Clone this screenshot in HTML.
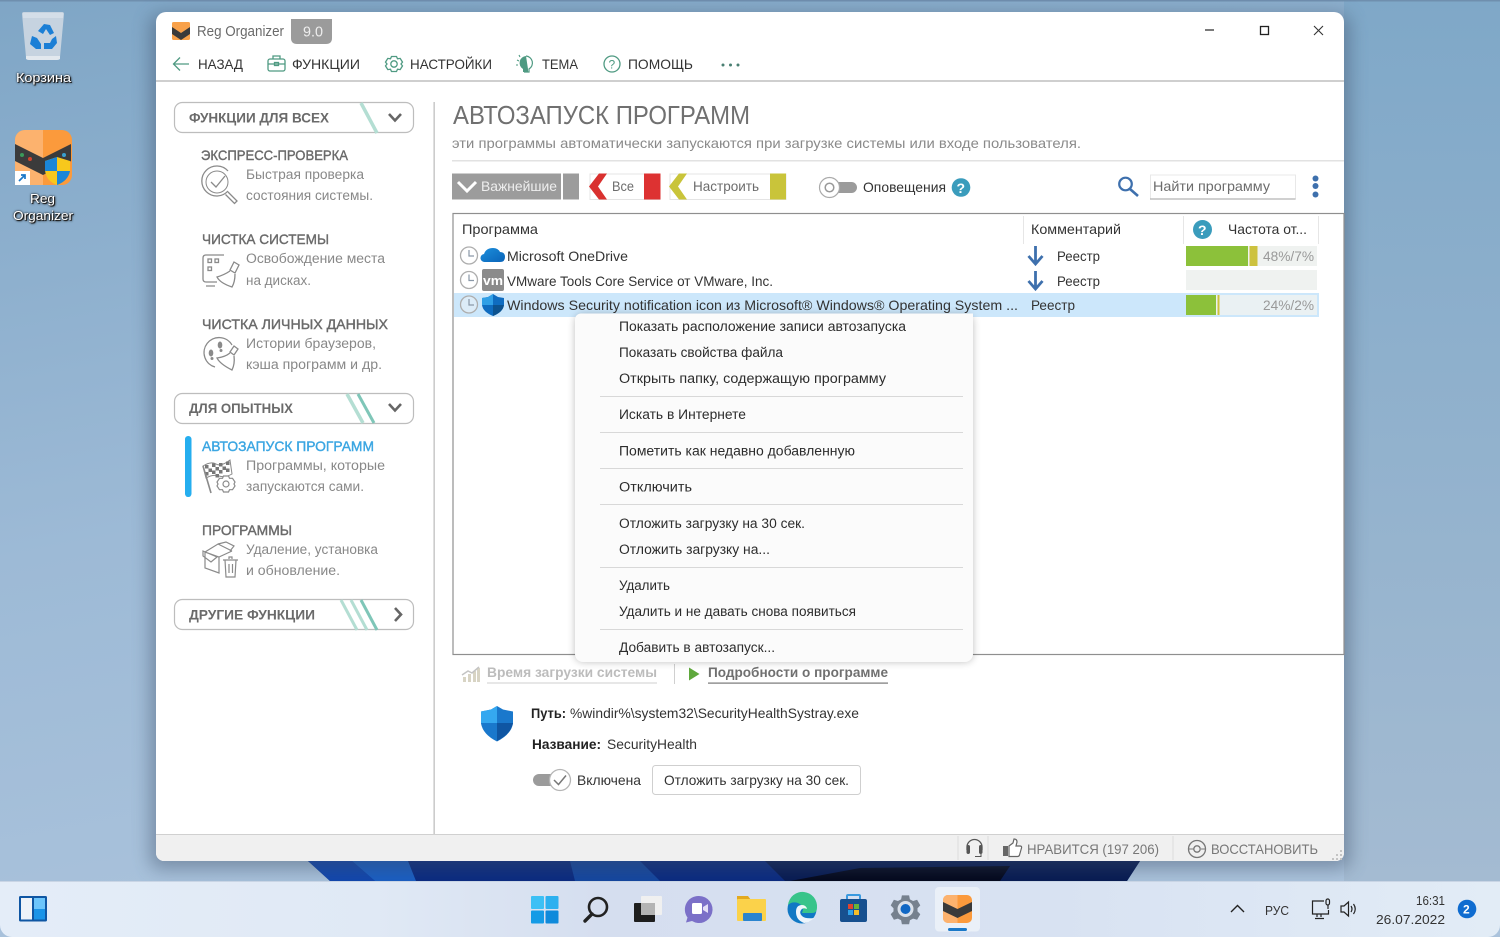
<!DOCTYPE html>
<html lang="ru"><head><meta charset="utf-8"><title>Reg Organizer</title>
<style>
html,body{margin:0;padding:0;width:1500px;height:937px;overflow:hidden;background:#9db9d2}
svg{display:block}
text{font-family:"Liberation Sans","DejaVu Sans",sans-serif;font-size:14px;fill:#333}
.g{fill:#888;font-size:13.5px}
.h{fill:#6a6a6a;font-size:14px;font-weight:bold}
.s{fill:#6c6c6c;font-size:14px}
.t{fill:#333;font-size:14px}
.m{fill:#2c2c2c;font-size:13.5px}
.d{fill:#fff;font-size:13px;filter:drop-shadow(1px 1px 0 #222) drop-shadow(0 0 1px #111)}
.k{fill:#222;font-size:13.5px;font-weight:bold}
</style></head><body>
<svg width="1500" height="937" viewBox="0 0 1500 937" xmlns="http://www.w3.org/2000/svg">
<defs>
<linearGradient id="wp" x1="0" y1="0" x2="0.3" y2="1"><stop offset="0" stop-color="#7fa6c6"/><stop offset=".55" stop-color="#9dbad6"/><stop offset="1" stop-color="#abc3dc"/></linearGradient>
<linearGradient id="wp2" x1="0" y1="0" x2="0" y2="1"><stop offset="0" stop-color="#7fa8c8"/><stop offset="1" stop-color="#a4bbd2"/></linearGradient>
<linearGradient id="tb" x1="0" y1="0" x2="1" y2="0"><stop offset="0" stop-color="#e4edf8"/><stop offset=".25" stop-color="#e0e9f5"/><stop offset=".4" stop-color="#d5deef"/><stop offset=".7" stop-color="#d8e2f2"/><stop offset="1" stop-color="#e2ecf6"/></linearGradient>
<linearGradient id="od" x1="0" y1="0" x2="1" y2="1"><stop offset="0" stop-color="#1c8fdc"/><stop offset="1" stop-color="#0a63b8"/></linearGradient>
<filter id="ws" x="-5%" y="-5%" width="110%" height="110%"><feGaussianBlur stdDeviation="9"/></filter>
<filter id="ms" x="-10%" y="-10%" width="120%" height="120%"><feGaussianBlur stdDeviation="4"/></filter>
</defs>

<!-- wallpaper -->
<rect width="1500" height="937" fill="url(#wp)"/>
<rect x="1344" width="156" height="881" fill="url(#wp2)"/>
<rect width="1500" height="1.5" fill="#6f8fae"/>
<polygon points="308,861 330,881 1127,881 1140,861" fill="#0a2a80"/>
<polygon points="308,861 330,881 375,881 352,861" fill="#1146ad"/>
<polygon points="352,861 375,881 416,881 408,861" fill="#1a5ec2"/>
<polygon points="570,861 575,881 660,881 640,861" fill="#14469f"/>
<polygon points="765,861 785,881 1127,881 1140,861" fill="#071a52"/>
<polygon points="790,881 860,868 1010,866 1000,881" fill="#03071c"/>
<rect x="150" y="14" width="1200" height="855" rx="10" fill="#3c5068" opacity=".45" filter="url(#ws)"/>

<!-- desktop icons -->
<path d="M22 14q0-2 2-2h38q2 0 2 2l-4 43q-1 3-4 3H30q-3 0-4-3z" fill="#c6d3e0"/>
<path d="M23 13h40v5H23z" fill="#d4dee8"/>
<path d="M26 56h34v3q-1 1-3 1H29q-2 0-3-1z" fill="#e2e8ee"/>
<path d="M44 24l6 1 4 8-4 2-4-6-3 5-5-3zM32 36l5 2 4 6 0 5h-5l-6-5zM56 36l1 7-5 6h-8v-6h6l2-4z" fill="#1b7fd6"/>
<text class="d" x="16" y="82" textLength="55" lengthAdjust="spacingAndGlyphs">Корзина</text>
<rect x="15" y="130" width="57" height="55" rx="10" fill="#fb9a3c"/>
<path d="M43 130H25a10 10 0 0 0-10 10v35a10 10 0 0 0 10 10h18z" fill="#fcb26e"/>
<path d="M15 144l28 14 28-14v17l-28 14-28-14z" fill="#3b3b3b"/>
<circle cx="22" cy="155" r="2" fill="#3a9a5a"/><circle cx="30" cy="159" r="2" fill="#d0432c"/><circle cx="64" cy="155" r="2" fill="#38a0d0"/>
<path d="M45 161l12-4 13 4v9q-2 11-13 15-11-4-12-15z" fill="#f7c81c"/>
<path d="M45 161l12-4v14H45zM57 171h13q-2 10-13 14z" fill="#1a86d8"/>
<rect x="15" y="171" width="15" height="14" fill="#fff"/>
<path d="M19 181l6-6m-4 0h4v4" stroke="#1a78c8" stroke-width="1.7" fill="none"/>
<text class="d" x="30" y="203" textLength="25" lengthAdjust="spacingAndGlyphs">Reg</text>
<text class="d" x="13" y="220" textLength="60" lengthAdjust="spacingAndGlyphs">Organizer</text>

<!-- window -->
<path d="M166 12H1334a10 10 0 0 1 10 10V853a8 8 0 0 1-8 8H164a8 8 0 0 1-8-8V22a10 10 0 0 1 10-10z" fill="#fff"/>
<rect x="172" y="22" width="18" height="18" rx="1.500" fill="#f8a14a"/>
<path d="M172 27l9 6 9-6v7l-9 6-9-6z" fill="#3a3a3a"/>
<text x="197" y="36" textLength="87" lengthAdjust="spacingAndGlyphs" style="fill:#6a6a6a;font-size:14.500px">Reg Organizer</text>
<path d="M291 19h41v19q0 6-6 6h-29q-6 0-6-6z" fill="#9b9b9b"/>
<text x="303" y="36.500" textLength="20" lengthAdjust="spacingAndGlyphs" style="fill:#eee;font-size:14.500px">9.0</text>
<path d="M1205 30h9" stroke="#333" stroke-width="1.300"/>
<rect x="1260.500" y="26.500" width="8" height="8" fill="none" stroke="#222" stroke-width="1.300"/>
<path d="M1314 26l9 9m0-9l-9 9" stroke="#333" stroke-width="1.100"/>

<!-- nav -->
<path d="M189 64h-15m6-6.500l-6.500 6.500 6.500 6.500" fill="none" stroke="#4f9a82" stroke-width="1.300"/>
<text class="t" x="198" y="69" textLength="45" lengthAdjust="spacingAndGlyphs">НАЗАД</text>
<g fill="none" stroke="#4f9a82" stroke-width="1.300"><rect x="268" y="59" width="17" height="12" rx="2"/><path d="M268 64h17M273 59v-3h7v3"/><rect x="274.500" y="62.500" width="4" height="3"/></g>
<text class="t" x="292" y="69" textLength="68" lengthAdjust="spacingAndGlyphs">ФУНКЦИИ</text>
<g fill="none" stroke="#4f9a82" stroke-width="1.300"><circle cx="394" cy="64" r="3.200"/><path d="M391.500 56.500h5l1 2.300 2.700-.4 2.300 3.700-1.500 1.900 1.500 1.900-2.300 3.700-2.700-.4-1 2.300h-5l-1-2.300-2.700.4-2.300-3.700 1.500-1.900-1.500-1.900 2.300-3.700 2.700.4z"/></g>
<text class="t" x="410" y="69" textLength="82" lengthAdjust="spacingAndGlyphs">НАСТРОЙКИ</text>
<path d="M526 56a7 7 0 0 0-3 13v3h5v-3" fill="#4f9a82"/><path d="M526 56a7 7 0 0 1 3 13v3h-5" fill="none" stroke="#4f9a82" stroke-width="1.200"/><path d="M517 60l2 1M516 65h2M519 55l1 2" stroke="#4f9a82" stroke-width="1.100"/>
<text class="t" x="542" y="69" textLength="36" lengthAdjust="spacingAndGlyphs">ТЕМА</text>
<circle cx="612" cy="64" r="8" fill="none" stroke="#4f9a82" stroke-width="1.300"/>
<text x="608.500" y="68.500" style="fill:#4f9a82;font-size:12px">?</text>
<text class="t" x="628" y="69" textLength="65" lengthAdjust="spacingAndGlyphs">ПОМОЩЬ</text>
<g fill="#4a7f72"><circle cx="723" cy="65" r="1.500"/><circle cx="730.500" cy="65" r="1.500"/><circle cx="738" cy="65" r="1.500"/></g>
<rect x="156" y="80" width="1188" height="2" fill="#cfcfcf"/>

<!-- sidebar -->
<rect x="174.500" y="102.500" width="239" height="30" rx="8" fill="#fff" stroke="#bdbdbd" stroke-width="1.200"/>
<path d="M361 103l16 30" stroke="#b4ded3" stroke-width="3.500"/>
<path d="M389 114l6 6.500 6-6.500" fill="none" stroke="#666" stroke-width="2.600"/>
<text class="h" x="189" y="122.500" textLength="140" lengthAdjust="spacingAndGlyphs">ФУНКЦИИ ДЛЯ ВСЕХ</text>

<text class="h" x="201" y="160" textLength="147" lengthAdjust="spacingAndGlyphs" style="font-weight:normal;stroke:#6a6a6a;stroke-width:.4">ЭКСПРЕСС-ПРОВЕРКА</text>
<g fill="none" stroke="#8a8a8a" stroke-width="1.300"><path d="M228 171a15 15 0 1 0 0 20"/><circle cx="217" cy="182" r="11" stroke-width="1"/><path d="M228 192l9 9-2.500 2.500-9-9M211 182l5 5 9-11" /></g>
<text class="g" x="246" y="179" textLength="118" lengthAdjust="spacingAndGlyphs">Быстрая проверка</text>
<text class="g" x="246" y="200" textLength="127" lengthAdjust="spacingAndGlyphs">состояния системы.</text>

<text class="h" x="202" y="244" textLength="127" lengthAdjust="spacingAndGlyphs" style="font-weight:normal;stroke:#6a6a6a;stroke-width:.4">ЧИСТКА СИСТЕМЫ</text>
<g fill="none" stroke="#8a8a8a" stroke-width="1.300"><path d="M224 255h-18q-3 0-3 3v21q0 3 3 3h11M206 286h9"/><rect x="208" y="259" width="3.500" height="3.500"/><rect x="215" y="259" width="3.500" height="3.500"/><rect x="208" y="267" width="3.500" height="3.500"/><path d="M234 262l5 3-4 8-5-3zM230 271q-6 4-13 6 3 6 15 10 3-5 3-13"/></g>
<text class="g" x="246" y="263" textLength="139" lengthAdjust="spacingAndGlyphs">Освобождение места</text>
<text class="g" x="246" y="285" textLength="65" lengthAdjust="spacingAndGlyphs">на дисках.</text>

<text class="h" x="202" y="329" textLength="186" lengthAdjust="spacingAndGlyphs" style="font-weight:normal;stroke:#6a6a6a;stroke-width:.4">ЧИСТКА ЛИЧНЫХ ДАННЫХ</text>
<g fill="none" stroke="#8a8a8a" stroke-width="1.300"><path d="M232 345a15 15 0 1 0-17 22"/><path d="M234 346l4 3-4 6-4-3zM230 353q-5 4-13 5 3 6 15 12 3-6 2-14"/></g>
<g fill="#8a8a8a"><ellipse cx="211" cy="353" rx="2.300" ry="3.500"/><ellipse cx="220" cy="345" rx="2.300" ry="3.500"/><circle cx="212" cy="358.500" r="1.500"/><circle cx="221" cy="350.500" r="1.500"/></g>
<text class="g" x="246" y="348" textLength="130" lengthAdjust="spacingAndGlyphs">Истории браузеров,</text>
<text class="g" x="246" y="369" textLength="136" lengthAdjust="spacingAndGlyphs">кэша программ и др.</text>

<rect x="174.500" y="393.500" width="239" height="30" rx="8" fill="#fff" stroke="#bdbdbd" stroke-width="1.200"/>
<path d="M347 394l16 29" stroke="#b4ded3" stroke-width="3.500"/><path d="M358 394l16 29" stroke="#7fc6b8" stroke-width="3"/>
<path d="M389 404l6 6.500 6-6.500" fill="none" stroke="#666" stroke-width="2.600"/>
<text class="h" x="189" y="413" textLength="104" lengthAdjust="spacingAndGlyphs">ДЛЯ ОПЫТНЫХ</text>

<rect x="185" y="436" width="6.500" height="61" rx="3.200" fill="#25aeef"/>
<text class="h" x="202" y="451" textLength="172" lengthAdjust="spacingAndGlyphs" style="font-weight:normal;fill:#3ba6e2;stroke:#3ba6e2;stroke-width:.4">АВТОЗАПУСК ПРОГРАММ</text>
<path d="M203 466q8-5 13-2t14-4l2 14q-7 4-13 2t-13 2z" fill="#fff" stroke="#8a8a8a" stroke-width="1"/>
<g fill="#777"><rect x="205" y="465" width="3.500" height="3.500"/><rect x="212" y="463.500" width="3.500" height="3.500"/><rect x="219" y="463" width="3.500" height="3.500"/><rect x="226" y="461.500" width="3.500" height="3.500"/><rect x="208.500" y="468.500" width="3.500" height="3.500"/><rect x="215.500" y="467" width="3.500" height="3.500"/><rect x="222.500" y="466.500" width="3.500" height="3.500"/><rect x="205" y="472" width="3.500" height="3.500"/><rect x="212" y="470.500" width="3.500" height="3.500"/><rect x="219" y="470" width="3.500" height="3.500"/><rect x="226" y="468.500" width="3.500" height="3.500"/><rect x="215.500" y="474" width="3.500" height="3.500"/></g>
<path d="M203 466l8 27" stroke="#8a8a8a" stroke-width="1.600"/>
<g fill="none" stroke="#8a8a8a" stroke-width="1.200"><path d="M223.500 476h5l1 2.300 3 0 2.500 3.700-1 2 1 2-2.500 3.700-3 0-1 2.300h-5l-1-2.300-3 0-2.500-3.700 1-2-1-2 2.500-3.700 3 0z" fill="#fff"/><circle cx="226" cy="484" r="3"/></g>
<text class="g" x="246" y="470" textLength="139" lengthAdjust="spacingAndGlyphs">Программы, которые</text>
<text class="g" x="246" y="491" textLength="118" lengthAdjust="spacingAndGlyphs">запускаются сами.</text>

<text class="h" x="202" y="535" textLength="90" lengthAdjust="spacingAndGlyphs" style="font-weight:normal;stroke:#6a6a6a;stroke-width:.4">ПРОГРАММЫ</text>
<g fill="none" stroke="#8a8a8a" stroke-width="1.200"><path d="M205 552v16l14 5v-16zM219 557l13-6M205 552l13-8 14 7M203 551l14 6 -6 5-8-6zM218 544l8-2 8 4-4 5"/><path d="M223 560h15M225 560l1 17h9l1-17M229 559v-2h3v2M229 564v9M232.500 564v9" fill="#fff"/></g>
<text class="g" x="246" y="554" textLength="132" lengthAdjust="spacingAndGlyphs">Удаление, установка</text>
<text class="g" x="246" y="575" textLength="94" lengthAdjust="spacingAndGlyphs">и обновление.</text>

<rect x="174.500" y="599.500" width="239" height="30" rx="8" fill="#fff" stroke="#bdbdbd" stroke-width="1.200"/>
<path d="M341 600l16 30" stroke="#b4ded3" stroke-width="3"/><path d="M351 600l16 30" stroke="#b4ded3" stroke-width="3"/><path d="M361 600l16 30" stroke="#7fc6b8" stroke-width="3"/>
<path d="M395 608l6 6.500-6 6.500" fill="none" stroke="#666" stroke-width="2.600"/>
<text class="h" x="189" y="619.500" textLength="126" lengthAdjust="spacingAndGlyphs">ДРУГИЕ ФУНКЦИИ</text>

<rect x="433.500" y="102" width="1.300" height="732" fill="#bfbfbf"/>

<!-- main header -->
<text x="453" y="124" textLength="297" lengthAdjust="spacingAndGlyphs" style="fill:#707070;font-size:26px">АВТОЗАПУСК ПРОГРАММ</text>
<text x="452" y="148" textLength="629" lengthAdjust="spacingAndGlyphs" style="fill:#8a8a8a;font-size:14px">эти программы автоматически запускаются при загрузке системы или входе пользователя.</text>
<rect x="452" y="160" width="892" height="1.500" fill="#e2e2e2"/>

<!-- filter bar -->
<rect x="452" y="173.500" width="109" height="26" fill="#9c9c9c"/>
<rect x="563" y="173.500" width="16" height="26" fill="#9c9c9c"/>
<path d="M458 182l9 9 9-9" fill="none" stroke="#fff" stroke-width="3"/>
<text x="481" y="191" textLength="76" lengthAdjust="spacingAndGlyphs" style="fill:#eee;font-size:14px">Важнейшие</text>
<rect x="590" y="174" width="70" height="25.500" fill="#fff" stroke="#e4e4e4"/>
<path d="M599 173.500h8l-9 13 9 13h-8l-10-13z" fill="#d9312f"/>
<rect x="644" y="173.500" width="16.500" height="26" fill="#dd3232"/>
<text class="s" x="612" y="191" textLength="22" lengthAdjust="spacingAndGlyphs">Все</text>
<rect x="670" y="174" width="116" height="25.500" fill="#fff" stroke="#e4e4e4"/>
<path d="M679 173.500h8l-9 13 9 13h-8l-10-13z" fill="#c9c43a"/>
<rect x="770" y="173.500" width="16" height="26" fill="#c9c43a"/>
<text class="s" x="693" y="191" textLength="66" lengthAdjust="spacingAndGlyphs">Настроить</text>
<rect x="832" y="182" width="25" height="11" rx="5.500" fill="#9b9b9b"/>
<circle cx="829.500" cy="187.500" r="10" fill="#fff" stroke="#aaa" stroke-width="1.200"/>
<circle cx="829.500" cy="187.500" r="4.300" fill="none" stroke="#999" stroke-width="1.500"/>
<text class="t" x="863" y="192" textLength="83" lengthAdjust="spacingAndGlyphs">Оповещения</text>
<circle cx="961" cy="187.500" r="9.300" fill="#3a9cbc"/>
<text x="956.500" y="193" style="fill:#fff;font-size:14px;font-weight:bold">?</text>
<circle cx="1125.500" cy="184" r="6.300" fill="none" stroke="#3e70ad" stroke-width="2.200"/>
<path d="M1130 189l8 7" stroke="#3e70ad" stroke-width="2.600"/>
<rect x="1150.500" y="175" width="145" height="24" fill="#fff" stroke="#e8e8e8"/>
<path d="M1150 199h145.500" stroke="#b5b5b5" stroke-width="1.200"/>
<text class="s" x="1153" y="191" textLength="117" lengthAdjust="spacingAndGlyphs">Найти программу</text>
<g fill="#3e70ad"><circle cx="1315.500" cy="178.500" r="3"/><circle cx="1315.500" cy="186" r="3"/><circle cx="1315.500" cy="194.500" r="3"/></g>

<!-- table -->
<rect x="453" y="213.500" width="891" height="441" fill="#fff" stroke="#8f8f8f" stroke-width="1.200"/>
<path d="M1023.500 216v28M1183.500 216v28M1318.500 216v28" stroke="#e6e6e6"/>
<text class="t" x="462" y="234" textLength="76" lengthAdjust="spacingAndGlyphs">Программа</text>
<text class="t" x="1031" y="234" textLength="90" lengthAdjust="spacingAndGlyphs">Комментарий</text>
<circle cx="1202.500" cy="229.500" r="9.500" fill="#3a9cbc"/>
<text x="1198" y="235" style="fill:#fff;font-size:14px;font-weight:bold">?</text>
<text class="t" x="1228" y="234" textLength="79" lengthAdjust="spacingAndGlyphs">Частота от...</text>

<rect x="454" y="293" width="865" height="24" fill="#cce7fb"/>
<g fill="#fff" stroke="#aeaeae" stroke-width="1.300">
<circle cx="469" cy="255.500" r="8.500"/><circle cx="469" cy="280" r="8.500"/><circle cx="469" cy="304.500" r="8.500" fill="#dcecf8"/></g>
<path d="M469 250v6h5M469 274.500v6h5M469 299v6h5" fill="none" stroke="#8a98a8" stroke-width="1.200"/>
<path d="M485 262a4 4 0 0 1-1-8q2-6 9-6 5 0 7 4 5 0 5 5t-5 5z" fill="url(#od)"/>
<rect x="482" y="269" width="22" height="22" rx="2" fill="#8b8b8b"/>
<text x="483" y="285" textLength="20" lengthAdjust="spacingAndGlyphs" style="fill:#fff;font-size:13px;font-weight:bold">vm</text>
<path d="M493 294l5 3 6 1v7q-1 7-11 11-10-4-11-11v-7l6-1z" fill="#0f6cc0"/>
<path d="M493 294v11h-11v-7l6-1z" fill="#2f9fe6"/>
<path d="M493 305h11q-1 7-11 11z" fill="#0c528f"/>
<text class="t" x="507" y="261" textLength="121" lengthAdjust="spacingAndGlyphs">Microsoft OneDrive</text>
<text class="t" x="507" y="286" textLength="266" lengthAdjust="spacingAndGlyphs">VMware Tools Core Service от VMware, Inc.</text>
<text class="t" x="507" y="310" textLength="511" lengthAdjust="spacingAndGlyphs">Windows Security notification icon из Microsoft® Windows® Operating System ...</text>
<path d="M1035.500 246v17m-7-7l7 8 7-8" fill="none" stroke="#3e70ad" stroke-width="2.800"/>
<path d="M1035.500 271v17m-7-7l7 8 7-8" fill="none" stroke="#3e70ad" stroke-width="2.800"/>
<text class="t" x="1057" y="261" textLength="43" lengthAdjust="spacingAndGlyphs">Реестр</text>
<text class="t" x="1057" y="286" textLength="43" lengthAdjust="spacingAndGlyphs">Реестр</text>
<text class="t" x="1031" y="310" textLength="44" lengthAdjust="spacingAndGlyphs">Реестр</text>
<rect x="1186" y="246" width="131" height="20" fill="#eff2f0"/>
<rect x="1186" y="246" width="62" height="20" fill="#8cc13a"/>
<rect x="1249.500" y="246" width="8" height="20" fill="#cdc23f"/>
<text x="1263" y="261" textLength="51" lengthAdjust="spacingAndGlyphs" style="fill:#999;font-size:14px">48%/7%</text>
<rect x="1186" y="270" width="131" height="20" fill="#eff2f0"/>
<rect x="1186" y="295" width="131" height="20" fill="#eaf1f3"/>
<rect x="1186" y="295" width="30" height="20" fill="#8cc13a"/>
<rect x="1217.500" y="295" width="2" height="20" fill="#cdc23f"/>
<text x="1263" y="310" textLength="51" lengthAdjust="spacingAndGlyphs" style="fill:#999;font-size:14px">24%/2%</text>

<!-- lower pane -->
<g fill="#d8d4c4"><rect x="463" y="677" width="3" height="5"/><rect x="468" y="674" width="3" height="8"/><rect x="473" y="671" width="3" height="11"/><rect x="477" y="668" width="3" height="14"/></g>
<path d="M462 675l6-4 4 2 7-6" fill="none" stroke="#c4c4c4" stroke-width="1.500"/>
<text x="487" y="677" textLength="170" lengthAdjust="spacingAndGlyphs" style="fill:#bcbcbc;font-size:14px;font-weight:bold">Время загрузки системы</text>
<rect x="487" y="682.500" width="170" height="1" fill="#cfcfcf"/>
<rect x="674" y="664" width="1" height="20" fill="#d0d0d0"/>
<path d="M689 667.500l10.500 6.500-10.500 6.500z" fill="#5fa83c"/>
<text x="708" y="677" textLength="180" lengthAdjust="spacingAndGlyphs" style="fill:#707070;font-size:14px;font-weight:bold">Подробности о программе</text>
<rect x="708" y="682.500" width="180" height="1.200" fill="#777"/>
<path d="M497 706l6 3.500 10 2v12q-2 11-16 18-14-7-16-18v-12l10-2z" fill="#1a78cc"/>
<path d="M497 706v17h-16v-11.500l10-2z" fill="#35a8f0"/>
<path d="M497 723h16q-2 11-16 18z" fill="#0f56a3"/>

<text class="k" x="531" y="718" textLength="35" lengthAdjust="spacingAndGlyphs">Путь:</text>
<text class="t" x="570" y="718" textLength="289" lengthAdjust="spacingAndGlyphs">%windir%\system32\SecurityHealthSystray.exe</text>
<text class="k" x="532" y="749" textLength="69" lengthAdjust="spacingAndGlyphs">Название:</text>
<text class="t" x="607" y="749" textLength="90" lengthAdjust="spacingAndGlyphs">SecurityHealth</text>
<rect x="533" y="774" width="26" height="12" rx="6" fill="#9b9b9b"/>
<circle cx="560" cy="780" r="10.500" fill="#fff" stroke="#b5b5b5" stroke-width="1.300"/>
<path d="M554 780l4.500 4.500 7.500-9" fill="none" stroke="#777" stroke-width="1.500"/>
<text class="t" x="577" y="785" textLength="64" lengthAdjust="spacingAndGlyphs">Включена</text>
<rect x="652.500" y="765.500" width="208" height="29" rx="3" fill="#fff" stroke="#cfcfcf"/>
<text class="t" x="664" y="785" textLength="185" lengthAdjust="spacingAndGlyphs">Отложить загрузку на 30 сек.</text>

<!-- status bar -->
<path d="M156 834h1188v19a8 8 0 0 1-8 8H164a8 8 0 0 1-8-8z" fill="#f0f0f0"/>
<rect x="156" y="834" width="1188" height="1" fill="#d0d0d0"/>
<path d="M958 836v24M988 836v24M1173 836v24" stroke="#dcdcdc"/>
<path d="M967 850v-3a7.500 7.500 0 0 1 15 0v3" fill="none" stroke="#555" stroke-width="1.300"/>
<rect x="966.500" y="845" width="3.500" height="9" rx="1.700" fill="#555"/><rect x="979" y="845" width="3.500" height="9" rx="1.700" fill="#555"/>
<path d="M981 854v2.500h-6" fill="none" stroke="#555"/>
<rect x="1003" y="846" width="5" height="10" fill="#666"/>
<path d="M1009 846l4-3 1-4q3 0 3 3l-1 4h4q2 0 1.500 2l-2 7q-.5 1.500-2 1.500h-8.500z" fill="#fff" stroke="#666" stroke-width="1.200"/>
<text x="1027" y="854" textLength="132" lengthAdjust="spacingAndGlyphs" style="fill:#777;font-size:14px">НРАВИТСЯ (197 206)</text>
<circle cx="1197" cy="849" r="8.500" fill="none" stroke="#777" stroke-width="1.300"/>
<circle cx="1197" cy="849" r="3.200" fill="none" stroke="#777" stroke-width="1.300"/>
<path d="M1189 849h4.500M1201 849h4.500" stroke="#777" stroke-width="1.100"/>
<text x="1211" y="854" textLength="107" lengthAdjust="spacingAndGlyphs" style="fill:#777;font-size:14px">ВОССТАНОВИТЬ</text>
<g fill="#c4c4c4"><rect x="1340" y="850" width="2" height="2"/><rect x="1336" y="854" width="2" height="2"/><rect x="1340" y="854" width="2" height="2"/><rect x="1332" y="858" width="2" height="2"/><rect x="1336" y="858" width="2" height="2"/><rect x="1340" y="858" width="2" height="2"/></g>

<!-- context menu -->
<rect x="575" y="314" width="398" height="348" rx="8" fill="#000" opacity=".25" filter="url(#ms)"/>
<path d="M581 313.500H973V654a8 8 0 0 1-8 8H583a8 8 0 0 1-8-8V319.500a6 6 0 0 1 6-6z" fill="#fbfbfb"/>
<path d="M600 396.500h363M600 432.500h363M600 468.500h363M600 504.500h363M600 567.500h363M600 629.500h363" stroke="#d8d8d8"/>
<text class="m" x="619" y="331" textLength="287" lengthAdjust="spacingAndGlyphs">Показать расположение записи автозапуска</text>
<text class="m" x="619" y="357" textLength="164" lengthAdjust="spacingAndGlyphs">Показать свойства файла</text>
<text class="m" x="619" y="383" textLength="267" lengthAdjust="spacingAndGlyphs">Открыть папку, содержащую программу</text>
<text class="m" x="619" y="419" textLength="127" lengthAdjust="spacingAndGlyphs">Искать в Интернете</text>
<text class="m" x="619" y="455.500" textLength="236" lengthAdjust="spacingAndGlyphs">Пометить как недавно добавленную</text>
<text class="m" x="619" y="491.500" textLength="73" lengthAdjust="spacingAndGlyphs">Отключить</text>
<text class="m" x="619" y="528" textLength="186" lengthAdjust="spacingAndGlyphs">Отложить загрузку на 30 сек.</text>
<text class="m" x="619" y="554" textLength="151" lengthAdjust="spacingAndGlyphs">Отложить загрузку на...</text>
<text class="m" x="619" y="590" textLength="51" lengthAdjust="spacingAndGlyphs">Удалить</text>
<text class="m" x="619" y="616" textLength="237" lengthAdjust="spacingAndGlyphs">Удалить и не давать снова появиться</text>
<text class="m" x="619" y="652" textLength="156" lengthAdjust="spacingAndGlyphs">Добавить в автозапуск...</text>

<!-- taskbar -->
<path d="M0 881H1500V925a12 12 0 0 1-12 12H12a12 12 0 0 1-12-12z" fill="url(#tb)"/>
<rect y="881" width="1500" height="1" fill="#c9d5e5"/>
<rect x="19" y="896" width="28" height="25.500" rx="1.500" fill="#0f56a3"/>
<rect x="21" y="898" width="11" height="21.500" fill="#eef3f8"/><rect x="34" y="898" width="11" height="11" fill="#6cc5fb"/><rect x="34" y="909" width="11" height="10.500" fill="#1a94e8"/>
<!-- start -->
<rect x="531" y="896" width="13" height="13" rx="1" fill="#3cc0f5"/><rect x="545.500" y="896" width="13" height="13" rx="1" fill="#2cb0ef"/>
<rect x="531" y="910.500" width="13" height="13" rx="1" fill="#159be6"/><rect x="545.500" y="910.500" width="13" height="13" rx="1" fill="#0f8adb"/>
<!-- search -->
<circle cx="598" cy="907" r="9" fill="none" stroke="#222" stroke-width="2.600"/><path d="M592 914l-7 7" stroke="#222" stroke-width="3.400" stroke-linecap="round"/>
<!-- task view -->
<rect x="634" y="903" width="21" height="19" rx="1" fill="#1e1e1e"/><rect x="641" y="896" width="21" height="19" rx="1" fill="#f0f0f0"/><rect x="641" y="903" width="14" height="12" fill="#b4b4b4"/>
<!-- chat -->
<path d="M699 896a13.500 13.500 0 1 1-7 25l-6 1.500 1.500-5a13.500 13.500 0 0 1 11.500-21.500z" fill="#7b70c8"/>
<rect x="692" y="903" width="10" height="11" rx="1.500" fill="#fff"/><path d="M703 907l5-3v9l-5-3z" fill="#e4e0f7"/>
<!-- explorer -->
<path d="M737 896h11l3 4h15v3h-29z" fill="#e3a91f"/><rect x="737" y="899" width="29" height="22" rx="1" fill="#fbd24a"/><rect x="743" y="913" width="19" height="8" rx="1" fill="#2a84cf"/>
<!-- edge -->
<circle cx="802" cy="909" r="14.500" fill="#1078c4"/><path d="M788 905a14.500 14.500 0 0 1 29 3q0 5-5 5h-10q3-7-4-10-6-2-10 2z" fill="#38c48a"/><path d="M796 912q0-7 6-7 4 0 5 4-4-2-6 1t1 6q3 3 12 2-5 5-10 5-8-3-8-11z" fill="#fff" opacity=".92"/>
<!-- store -->
<rect x="840" y="899" width="27" height="23" rx="2" fill="#17508f"/><path d="M847 899v-3q0-1 1-1h11q1 0 1 1v3" fill="none" stroke="#3a9ae0" stroke-width="2"/>
<rect x="848" y="904" width="5" height="5" fill="#e0452f"/><rect x="854" y="904" width="5" height="5" fill="#69b33a"/><rect x="848" y="910" width="5" height="5" fill="#2ea0e8"/><rect x="854" y="910" width="5" height="5" fill="#f4bd28"/>
<!-- settings -->
<g transform="translate(905.500 909) scale(.8) translate(-905.500 -909)"><path d="M901 892h9l1 5 4 2 5-1.500 4 7-3.500 3.500v4l3.500 3.500-4 7-5-1.500-4 2-1 5h-9l-1-5-4-2-5 1.500-4-7 3.500-3.500v-4l-3.500-3.500 4-7 5 1.500 4-2z" fill="#76818e"/></g>
<circle cx="905.500" cy="909" r="8" fill="#d9e0ea"/><circle cx="905.500" cy="909" r="5" fill="#1067c4"/>
<!-- reg org active -->
<rect x="935" y="887" width="45" height="44.500" rx="4" fill="#eaf0f8"/>
<rect x="943" y="895" width="29" height="28" rx="5" fill="#fb9a3c"/><path d="M957.500 895H948a5 5 0 0 0-5 5v18a5 5 0 0 0 5 5h9.500z" fill="#fcb26e"/>
<path d="M943 902l14.500 7 14.500-7v9l-14.500 7-14.500-7z" fill="#3a3a3a"/>
<rect x="948" y="928" width="19" height="3" rx="1.500" fill="#1a78c8"/>
<!-- tray -->
<path d="M1231 912l6.500-6.500 6.500 6.500" fill="none" stroke="#222" stroke-width="1.400"/>
<text class="t" x="1265" y="915" textLength="24" lengthAdjust="spacingAndGlyphs" style="font-size:13px">РУС</text>
<g fill="none" stroke="#222" stroke-width="1.200"><path d="M1324 901h-11.500v13h16v-4M1317 914v3m4-3v3m-6 1.500h9"/><rect x="1326" y="899" width="3.500" height="6" rx="1.700"/><path d="M1328 905v4"/></g>
<g fill="none" stroke="#222" stroke-width="1.200"><path d="M1341 906h3l4.500-4v14l-4.500-4h-3zM1351 906q2 3 0 6M1353.500 904q3.500 5 0 10"/></g>
<text class="t" x="1416" y="905" textLength="29" lengthAdjust="spacingAndGlyphs" style="font-size:13px">16:31</text>
<text class="t" x="1376" y="924" textLength="69" lengthAdjust="spacingAndGlyphs" style="font-size:13px">26.07.2022</text>
<circle cx="1467" cy="909" r="9.300" fill="#0f6cd0"/>
<text x="1463" y="913.500" style="fill:#fff;font-size:12px;font-weight:bold">2</text>
</svg>
</body></html>
